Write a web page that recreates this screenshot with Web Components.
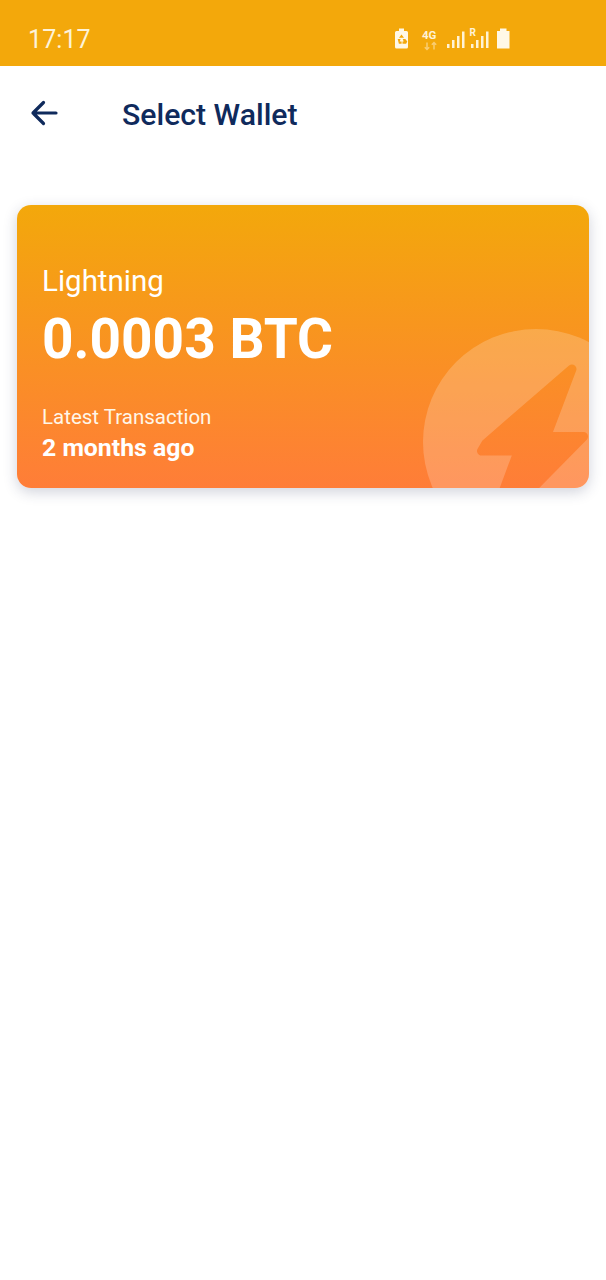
<!DOCTYPE html>
<html><head><meta charset="utf-8"><style>
html,body{margin:0;padding:0;background:#fff;font-family:Roboto,"Liberation Sans",sans-serif}
body{width:606px;height:1280px;overflow:hidden}
</style></head><body>
<status-bar time="17:17"></status-bar>
<app-bar>Select Wallet</app-bar>
<wallet-card name="Lightning" amount="0.0003 BTC" label="Latest Transaction" when="2 months ago"></wallet-card>
<script>
class StatusBar extends HTMLElement{constructor(){super();const s=this.attachShadow({mode:'open'});s.innerHTML=`<style>
:host{display:flex;align-items:center;height:66px;background:#f3a80b;box-sizing:border-box;padding:13px 0 0 28px;color:#fff}
.t{font:400 25px/1 Roboto,sans-serif;letter-spacing:.1px;color:#fdf3d8}
.i{margin-left:auto;margin-right:92px;display:flex;align-items:center;margin-bottom:2px}
svg{display:block}
</style><span class="t">${this.getAttribute('time')}</span><span class="i">
<svg width="122" height="26" viewBox="0 0 122 26">
<path fill="#fff8e6" d="M4.500 5H7V2.500h5V5h2.500A1.500 1.500 0 0 1 16 6.500v14.500a1.500 1.500 0 0 1-1.500 1.500h-10A1.500 1.500 0 0 1 3 21V6.500A1.500 1.500 0 0 1 4.500 5z"/>
<path fill="#f3a80b" d="M9.500 8.500l2.500 3.200H7zM5.700 13h2.900l-.9 2.500h1.900v2.300H6.900zM13.300 13h-2.600l1 2.500h-1.200v2.300h3.600l1.200-2.300z"/>
<text x="30" y="12.500" font-family="Roboto,sans-serif" font-weight="700" font-size="11.500" fill="#fff3d6">4G</text>
<path fill="none" stroke="#f9cd74" stroke-width="1.500" d="M35 16.500v7M32.800 21.300L35 23.500l2.200-2.200M42 23.500v-7M39.800 18.700L42 16.500l2.200 2.200"/>
<g fill="#fff3d6"><rect x="55" y="18" width="2.500" height="4"/><rect x="60" y="14" width="2.500" height="8"/><rect x="65" y="10" width="2.500" height="12"/><rect x="70" y="5.500" width="2.500" height="16.500"/>
<rect x="79" y="18" width="2.500" height="4"/><rect x="84" y="14" width="2.500" height="8"/><rect x="89" y="10" width="2.500" height="12"/><rect x="94" y="5.500" width="2.500" height="16.500"/></g>
<text x="77.500" y="10" font-family="Roboto,sans-serif" font-weight="700" font-size="10" fill="#fff3d6">R</text>
<path fill="#fff8e6" d="M105 5h3V2.500h6.500V5h3v17.500H105z"/>
</svg></span>`;}}
customElements.define('status-bar',StatusBar);

class AppBar extends HTMLElement{constructor(){super();const s=this.attachShadow({mode:'open'});s.innerHTML=`<style>
:host{display:flex;align-items:center;height:96px;box-sizing:border-box;padding-left:30px;background:#fff;color:#0f2a5c}
svg{display:block;flex:none;margin-top:-3px}
.t{font:500 30.200px/1 Roboto,sans-serif;margin-left:64px;margin-top:3px}
</style><svg width="28" height="28" viewBox="0 0 28 28"><path fill="none" stroke="#0f2a5c" stroke-width="3.200" stroke-linecap="round" stroke-linejoin="round" d="M26 14H3M13.500 3.500L3 14l10.500 10.500"/></svg><span class="t"><slot></slot></span>`;}}
customElements.define('app-bar',AppBar);

class WalletCard extends HTMLElement{constructor(){super();const s=this.attachShadow({mode:'open'});const a=n=>this.getAttribute(n);s.innerHTML=`<style>
:host{display:flex;flex-direction:column;position:relative;box-sizing:border-box;margin:43px 17px 0;height:283px;padding:59px 25px 0;border-radius:14px;background:linear-gradient(180deg,#f3a80b 0%,#ff7d38 100%);color:#fff;box-shadow:0 4px 14px rgba(40,50,90,.22)}
.clip{position:absolute;inset:0;border-radius:14px;overflow:hidden}
.clip svg{position:absolute;left:0;top:0}
.c{position:relative;display:flex;flex-direction:column}
.n{font:400 29.500px/34px Roboto,sans-serif}
.a{font:700 55px/66px Roboto,sans-serif;margin-top:8px}
.l{font:400 20.500px/24px Roboto,sans-serif;margin-top:33px;color:#fff6e8}
.w{font:700 24.800px/28px Roboto,sans-serif;margin-top:5px}
</style><div class="clip"><svg width="572" height="283" viewBox="17 205 572 283">
<mask id="m" maskUnits="userSpaceOnUse" x="17" y="205" width="572" height="283"><rect x="17" y="205" width="572" height="283" fill="#fff"/>
<path d="M572 369L486 443.300L481.500 451H518.300L501.500 496H525L583.500 436.500H546.500Z" fill="#000" stroke="#000" stroke-width="9" stroke-linejoin="round"/></mask>
<circle cx="536" cy="442" r="113" fill="#fff" fill-opacity=".2" mask="url(#m)"/>
</svg></div><div class="c"><span class="n">${a('name')}</span><span class="a">${a('amount')}</span><span class="l">${a('label')}</span><span class="w">${a('when')}</span></div>`;}}
customElements.define('wallet-card',WalletCard);
</script>
</body></html>
